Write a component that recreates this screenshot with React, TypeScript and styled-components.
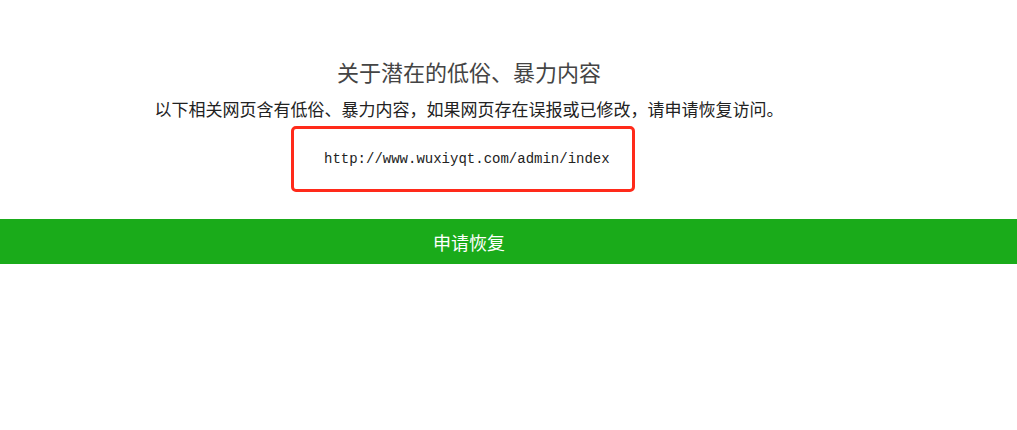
import styled, { createGlobalStyle } from 'styled-components'

const Global = createGlobalStyle`
  body {
    margin: 0;
    background: #fff;
    font-family: "Liberation Sans", "Noto Sans CJK SC", sans-serif;
  }
`

const Page = styled.div`
  width: 100%;
`

const Inner = styled.div`
  width: 938px;
  display: flex;
  flex-direction: column;
  align-items: center;
`

const Top = styled(Inner)`
  padding-top: 59px;
`

const Title = styled.h2`
  margin: 0;
  font-size: 22px;
  font-weight: normal;
  line-height: 30px;
  color: #444;
`

const Desc = styled.p`
  margin: 11px 0 0;
  font-size: 17px;
  line-height: 22px;
  color: #222;
`

const UrlBox = styled.div`
  margin: 4px 12px 0 0;
  width: 308px;
  height: 60px;
  padding-left: 30px;
  border: 3px solid #ff2a1a;
  border-radius: 5px;
  display: flex;
  align-items: center;
`

const Url = styled.span`
  font-family: "Liberation Mono", monospace;
  font-size: 14px;
  color: #222;
`

const Bar = styled.div`
  margin-top: 27px;
  background: #1aab1a;
  height: 45px;
`

const BarInner = styled(Inner)`
  height: 100%;
  justify-content: center;
`

const BarText = styled.span`
  color: #fff;
  font-size: 18px;
`

export default function App() {
  return (
    <Page>
      <Global />
      <Top>
        <Title>关于潜在的低俗、暴力内容</Title>
        <Desc>以下相关网页含有低俗、暴力内容，如果网页存在误报或已修改，请申请恢复访问。</Desc>
        <UrlBox>
          <Url>http://www.wuxiyqt.com/admin/index</Url>
        </UrlBox>
      </Top>
      <Bar>
        <BarInner>
          <BarText>申请恢复</BarText>
        </BarInner>
      </Bar>
    </Page>
  )
}
